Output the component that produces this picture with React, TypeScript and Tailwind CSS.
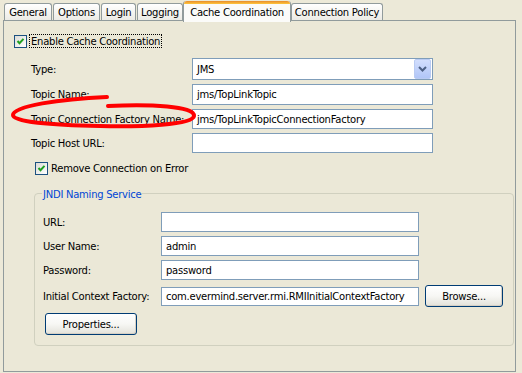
import React from 'react';

const tabs = [
  { label: 'General', w: 'w-[48px]', ml: 'ml-0' },
  { label: 'Options', w: 'w-[47px]', ml: 'ml-[1px]' },
  { label: 'Login', w: 'w-[35px]', ml: 'ml-[1px]' },
  { label: 'Logging', w: 'w-[46px]', ml: 'ml-[1px]' },
];

function CheckBox() {
  return (
    <span className="flex h-[13px] w-[13px] shrink-0 items-center justify-center border border-[#1c5180] bg-gradient-to-br from-[#dcdcd7] to-white">
      <svg width="9" height="9" viewBox="0 0 9 9">
        <path d="M1.5 4 L3.5 6.2 L7.5 1.8" fill="none" stroke="#21a121" strokeWidth="2" />
      </svg>
    </span>
  );
}

function Field({ value, className }: { value?: string; className: string }) {
  return (
    <div className={`flex items-center border border-[#7f9db9] bg-white pl-[4px] whitespace-nowrap overflow-hidden ${className}`}>
      {value}
    </div>
  );
}

function XpButton({ label, className }: { label: string; className: string }) {
  return (
    <div className={`flex h-[22px] items-center justify-center rounded-[3px] border border-[#003c74] bg-gradient-to-b from-white via-[#f7f7f4] to-[#e3e2da] shadow-[inset_-1px_-1px_0_#d6d0c5] ${className}`}>
      {label}
    </div>
  );
}

export default function App() {
  return (
    <div className="relative h-[373px] w-[522px] overflow-hidden bg-[#ece9d8] pt-[1px] font-['DejaVu_Sans',sans-serif] text-[10px] tracking-[-0.25px] text-black">
      {/* tab strip */}
      <div className="relative z-10 flex h-[19px] items-end pl-[4px]">
        {tabs.map((t) => (
          <div
            key={t.label}
            className={`flex h-[17px] items-center justify-center rounded-t-[3px] border border-b-0 border-[#919b9c] bg-gradient-to-b from-white to-[#ecebe5] ${t.w} ${t.ml}`}
          >
            {t.label}
          </div>
        ))}
        <div className="mb-[-2px] flex h-[21px] w-[108px] flex-col rounded-t-[3px] border-x border-[#919b9c] bg-[#fbfbf9]">
          <div className="h-[3px] rounded-t-[3px] bg-gradient-to-b from-[#e68b2c] to-[#ffc73c]" />
          <div className="flex flex-1 items-start justify-center pt-[1px]">Cache Coordination</div>
        </div>
        <div className="flex h-[17px] w-[92px] items-center justify-center rounded-t-[3px] border border-b-0 border-[#919b9c] bg-gradient-to-b from-white to-[#ecebe5]">
          Connection Policy
        </div>
      </div>

      {/* panel */}
      <div className="ml-[3px] h-[352px] w-[513px] border border-[#919b9c] bg-[#ebe8d7] pl-[10px] pt-[13px]">
        <div className="flex h-[14px] items-center">
          <CheckBox />
          <span className="ml-[2px] flex h-[14px] items-center border border-dotted border-black pl-[1px] pr-[1px]">
            Enable Cache Coordination
          </span>
        </div>

        <div className="ml-[17px] mt-[10px] flex flex-col gap-[4px]">
          <div className="flex items-center">
            <span className="w-[161px]">Type:</span>
            <div className="flex h-[22px] w-[241px] items-center border border-[#7f9db9] bg-white pl-[4px] pr-[1px]">
              <span className="flex-1">JMS</span>
              <span className="flex h-[20px] w-[17px] items-center justify-center rounded-[2px] border border-[#b9cbf3] bg-gradient-to-b from-[#d2defd] to-[#b1c6f8]">
                <svg width="9" height="6" viewBox="0 0 9 6">
                  <path d="M1 1 L4.5 4.5 L8 1" fill="none" stroke="#4d6185" strokeWidth="2" />
                </svg>
              </span>
            </div>
          </div>
          <div className="flex items-center">
            <span className="w-[161px]">Topic Name:</span>
            <Field value="jms/TopLinkTopic" className="h-[21px] w-[241px]" />
          </div>
          <div className="flex items-center">
            <span className="w-[161px]">Topic Connection Factory Name:</span>
            <Field value="jms/TopLinkTopicConnectionFactory" className="h-[20px] w-[241px]" />
          </div>
          <div className="flex items-center">
            <span className="w-[161px]">Topic Host URL:</span>
            <Field className="h-[20px] w-[241px]" />
          </div>
        </div>

        <div className="ml-[21px] mt-[9px] flex h-[13px] items-center">
          <CheckBox />
          <span className="ml-[3px]">Remove Connection on Error</span>
        </div>

        {/* JNDI group */}
        <div className="relative ml-[20px] mt-[18px] h-[153px] w-[480px] rounded-[4px] border border-[#d0d0bf] pl-[8px] pt-[18px]">
          <span className="absolute left-[7px] top-[-7px] bg-[#ebe8d7] px-[1px] text-[#0046d5]">JNDI Naming Service</span>
          <div className="flex flex-col gap-[4px]">
            <div className="flex items-center">
              <span className="w-[118px]">URL:</span>
              <Field className="h-[20px] w-[258px]" />
            </div>
            <div className="flex items-center">
              <span className="w-[118px]">User Name:</span>
              <Field value="admin" className="h-[20px] w-[258px]" />
            </div>
            <div className="flex items-center">
              <span className="w-[118px]">Password:</span>
              <Field value="password" className="h-[20px] w-[258px]" />
            </div>
            <div className="mt-[1px] flex h-[22px] items-center">
              <span className="w-[118px]">Initial Context Factory:</span>
              <Field value="com.evermind.server.rmi.RMIInitialContextFactory" className="h-[19px] w-[258px]" />
              <XpButton label="Browse..." className="ml-[6px] w-[78px]" />
            </div>
          </div>
          <XpButton label="Properties..." className="ml-[2px] mt-[6px] w-[92px]" />
        </div>
      </div>

      {/* red hand-drawn annotation */}
      <svg className="pointer-events-none absolute left-0 top-0" width="522" height="373">
        <path
          d="M108 106 C150 104 195 106 194 116 C193 125 140 127 100 126 C50 125 13 122 13 115 C13 106 60 99 107 97"
          fill="none"
          stroke="#f00"
          strokeWidth="4"
          strokeLinecap="round"
        />
      </svg>
    </div>
  );
}
